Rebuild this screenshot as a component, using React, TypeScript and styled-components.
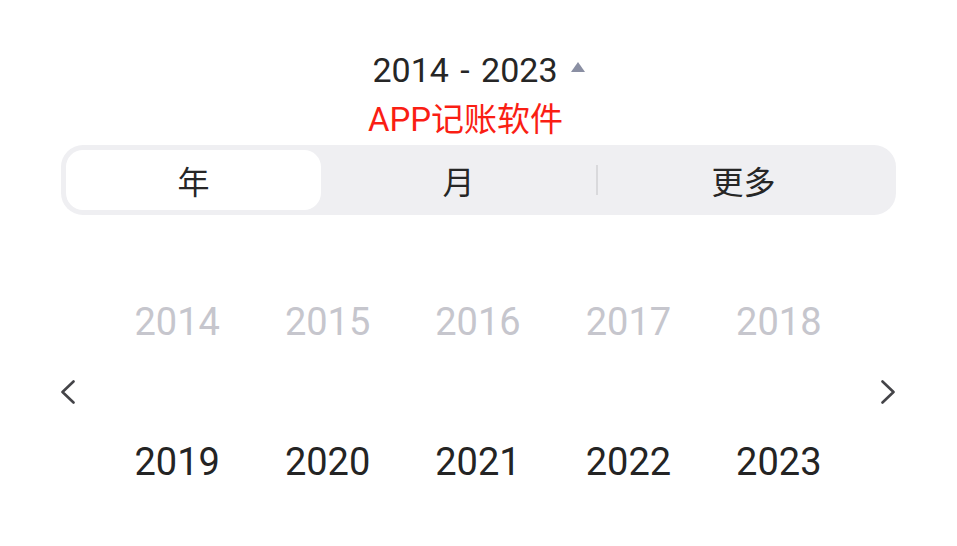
import styled, { createGlobalStyle } from 'styled-components';

const GlobalStyle = createGlobalStyle`
  html, body {
    margin: 0;
    padding: 0;
    background: #ffffff;
  }
  body {
    font-family: Roboto, 'Noto Sans CJK SC', sans-serif;
  }
`;

const Page = styled.div`
  display: flex;
  flex-direction: column;
  align-items: stretch;
  width: 957px;
  height: 546px;
  padding-top: 50px;
  box-sizing: border-box;
  overflow: hidden;
`;

const RangeRow = styled.div`
  display: flex;
  justify-content: center;
  align-items: center;
  gap: 13px;
  height: 40px;
  font-size: 34px;
  word-spacing: 3px;
  color: #262626;
`;

const Caret = styled.span`
  width: 0;
  height: 0;
  border-left: 7.5px solid transparent;
  border-right: 7.5px solid transparent;
  border-bottom: 10px solid #8a8fa3;
  margin-top: -6px;
`;

const Caption = styled.div`
  margin-top: 10px;
  padding-right: 26px;
  height: 40px;
  line-height: 40px;
  text-align: center;
  font-size: 33px;
  color: #fa1e14;
`;

const Segments = styled.div`
  display: grid;
  grid-template-columns: 255px 275px 1fr;
  margin: 5px 61px 0;
  height: 70px;
  padding: 5px;
  box-sizing: border-box;
  background: #efeff2;
  border-radius: 22px;
`;

const Segment = styled.div<{ $active?: boolean; $divider?: boolean }>`
  position: relative;
  display: flex;
  align-items: center;
  justify-content: center;
  font-size: 32px;
  color: #262626;
  border-radius: 17px;
  background: ${(p) => (p.$active ? '#ffffff' : 'transparent')};

  &::before {
    content: '';
    display: ${(p) => (p.$divider ? 'block' : 'none')};
    position: absolute;
    left: 0;
    top: 15px;
    width: 2px;
    height: 30px;
    background: #d9d9dc;
  }
`;

const Picker = styled.div`
  display: flex;
  align-items: center;
  margin-top: 77px;
  padding: 0 62px 0 61px;
  gap: 27px;
`;

const Arrow = styled.button`
  display: flex;
  align-items: center;
  justify-content: center;
  width: 14px;
  height: 24px;
  padding: 0;
  border: none;
  background: none;
  color: #444448;
`;

const YearGrid = styled.div`
  flex: 1;
  display: grid;
  grid-template-columns: repeat(5, 1fr);
  grid-auto-rows: 60px;
  row-gap: 80px;
`;

const Year = styled.div<{ $faded?: boolean }>`
  display: flex;
  align-items: center;
  justify-content: center;
  font-size: 38px;
  color: ${(p) => (p.$faded ? '#c6c6cd' : '#242424')};
`;

const Chevron = ({ dir }: { dir: 'left' | 'right' }) => (
  <svg width="14" height="24" viewBox="0 0 14 24" fill="none">
    <polyline
      points={dir === 'left' ? '12.5,1.5 1.5,12 12.5,22.5' : '1.5,1.5 12.5,12 1.5,22.5'}
      stroke="currentColor"
      strokeWidth="2.6"
      strokeLinecap="round"
      strokeLinejoin="round"
    />
  </svg>
);

const years = [2014, 2015, 2016, 2017, 2018, 2019, 2020, 2021, 2022, 2023];

const App = () => {
  return (
    <Page>
      <GlobalStyle />
      <RangeRow>
        <span>2014 - 2023</span>
        <Caret />
      </RangeRow>
      <Caption>APP记账软件</Caption>
      <Segments>
        <Segment $active>年</Segment>
        <Segment>月</Segment>
        <Segment $divider>更多</Segment>
      </Segments>
      <Picker>
        <Arrow>
          <Chevron dir="left" />
        </Arrow>
        <YearGrid>
          {years.map((y, i) => (
            <Year key={y} $faded={i < 5}>
              {y}
            </Year>
          ))}
        </YearGrid>
        <Arrow>
          <Chevron dir="right" />
        </Arrow>
      </Picker>
    </Page>
  );
};

export default App;
